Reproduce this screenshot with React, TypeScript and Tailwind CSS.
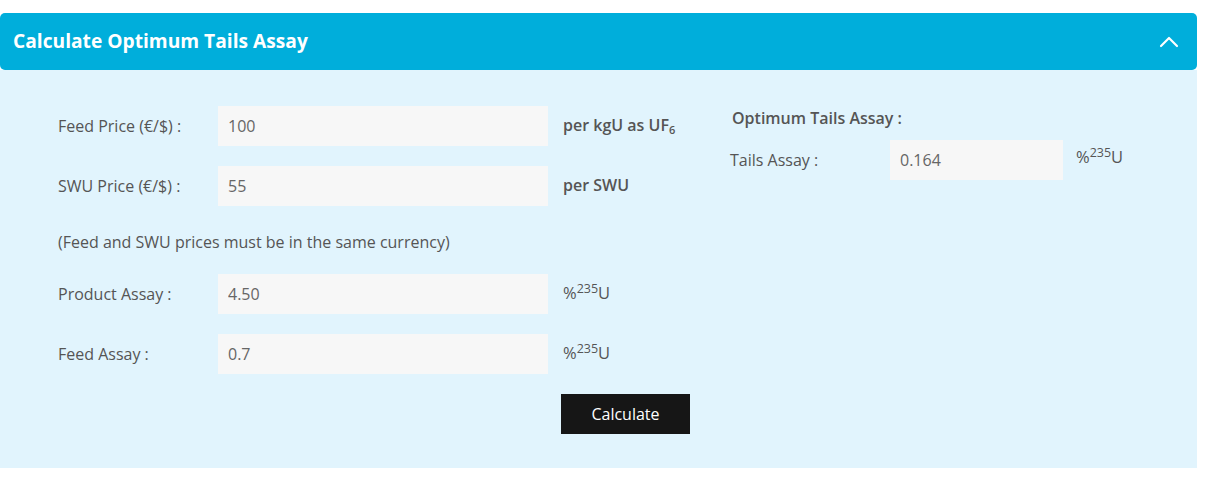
import { ChevronUp } from 'lucide-react'

type Row = { label: string; value: string; unit: React.ReactNode }

const pct = (
  <span className="text-[16.5px] font-normal">
    %<sup className="text-[12.5px]">235</sup>U
  </span>
)

const priceRows: Row[] = [
  {
    label: 'Feed Price (€/$) :',
    value: '100',
    unit: (
      <span>
        per kgU as UF<sub className="text-[11px]">6</sub>
      </span>
    ),
  },
  { label: 'SWU Price (€/$) :', value: '55', unit: 'per SWU' },
]

const assayRows: Row[] = [
  { label: 'Product Assay :', value: '4.50', unit: pct },
  { label: 'Feed Assay :', value: '0.7', unit: pct },
]

function Field({ label, value, unit }: Row) {
  return (
    <div className="flex h-10 items-center">
      <label className="w-[160px] text-[16px] text-[#555]">{label}</label>
      <input
        readOnly
        value={value}
        className="h-10 w-[330px] bg-[#f7f7f7] px-[10px] text-[16px] text-[#666] outline-none"
      />
      <div className="ml-[15px] self-start pt-[9px] text-[16px] font-semibold leading-5 text-[#555]">
        {unit}
      </div>
    </div>
  )
}

export default function App() {
  return (
    <div className="bg-white pt-[13px] pr-[18px]" style={{ fontFamily: '"Open Sans", "Noto Sans", sans-serif' }}>
      <div className="flex h-[57px] items-center justify-between rounded-[5px] bg-[#00aedb] pl-[13px] pr-[12px]">
        <h2 className="text-[19.2px] font-bold text-white">Calculate Optimum Tails Assay</h2>
        <ChevronUp className="h-8 w-8 text-white" strokeWidth={1.6} />
      </div>

      <div className="flex bg-[#e1f4fd] pt-9 pb-[34px] pl-[58px]">
        <div className="w-[672px]">
          <div className="flex flex-col gap-5">
            {priceRows.map((r) => (
              <Field key={r.label} {...r} />
            ))}
          </div>
          <p className="mt-[25px] mb-[21px] text-[16px] leading-[22px] text-[#555]">
            (Feed and SWU prices must be in the same currency)
          </p>
          <div className="flex flex-col gap-5">
            {assayRows.map((r) => (
              <Field key={r.label} {...r} />
            ))}
          </div>
          <div className="mt-5 pl-[503px]">
            <button className="h-10 w-[129px] bg-[#161616] text-[16px] text-white">Calculate</button>
          </div>
        </div>

        <div>
          <h3 className="pl-[2px] text-[16px] leading-6 font-semibold text-[#555]">Optimum Tails Assay :</h3>
          <div className="mt-[10px] flex h-10 items-center">
            <label className="w-[160px] text-[16px] text-[#555]">Tails Assay :</label>
            <input
              readOnly
              value="0.164"
              className="h-10 w-[173px] bg-[#f7f7f7] px-[10px] text-[16px] text-[#666] outline-none"
            />
            <div className="ml-[13px] self-start pt-[7px] leading-5 text-[#555]">{pct}</div>
          </div>
        </div>
      </div>
    </div>
  )
}
